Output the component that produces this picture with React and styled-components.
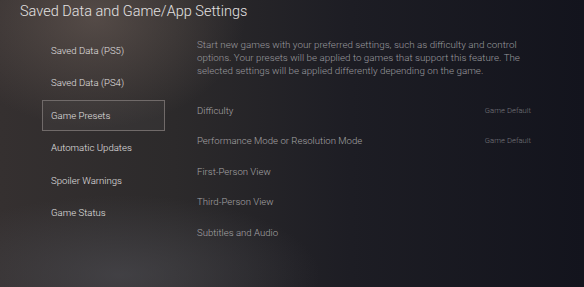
import React from 'react';
import styled, {createGlobalStyle} from 'styled-components';

const GlobalStyle = createGlobalStyle`
  html, body {
    margin: 0;
    padding: 0;
    background: #14151d;
  }
  body {
    font-family: Roboto, "Noto Sans", sans-serif;
  }
`;

const Screen = styled.div`
  width: 584px;
  height: 287px;
  overflow: hidden;
  box-sizing: border-box;
  background:
    radial-gradient(ellipse 150px 110px at 95px 18px, rgba(120, 104, 96, 0.5), rgba(120, 104, 96, 0) 100%),
    radial-gradient(ellipse 200px 80px at 120px 275px, rgba(78, 78, 84, 0.6), rgba(78, 78, 84, 0) 100%),
    linear-gradient(to right, #353030 0%, #2c2a2b 30%, #1d1d24 60%, #13141d 100%);
  color: #d8d8d8;
`;

const Title = styled.h1`
  margin: 0;
  padding: 3px 0 0 20px;
  height: 32px;
  box-sizing: border-box;
  font-size: 14.5px;
  font-weight: 300;
  color: #e4e2e2;
`;

const Body = styled.div`
  display: grid;
  grid-template-columns: 123px 1fr;
  column-gap: 32px;
  padding-left: 42px;
  padding-top: 3px;
`;

const Menu = styled.ul`
  list-style: none;
  margin: 0;
  padding: 0;
  display: flex;
  flex-direction: column;
  gap: 1.4px;
`;

const MenuItem = styled.li`
  height: 31px;
  box-sizing: border-box;
  display: flex;
  align-items: center;
  padding-left: 8px;
  font-size: 9.6px;
  font-weight: 300;
  color: #e2e0e0;
  border: 1px solid ${p => (p.$active ? '#706a69' : 'transparent')};
  background: ${p => (p.$active ? 'rgba(255,255,255,0.035)' : 'transparent')};
`;

const Content = styled.div`
  width: 345px;
  padding-top: 3px;
`;

const Description = styled.p`
  max-width: 328px;
  margin: 0 0 18px;
  font-size: 9.8px;
  font-weight: 300;
  line-height: 13px;
  color: #9a9a9f;
`;

const Row = styled.div`
  height: 30.5px;
  display: flex;
  align-items: center;
  justify-content: space-between;
  padding-right: 11px;
`;

const RowLabel = styled.span`
  font-size: 9.6px;
  font-weight: 300;
  color: #a6a4a6;
`;

const RowValue = styled.span`
  font-size: 7.7px;
  font-weight: 300;
  color: #76767c;
`;

const menu = [
  'Saved Data (PS5)',
  'Saved Data (PS4)',
  'Game Presets',
  'Automatic Updates',
  'Spoiler Warnings',
  'Game Status'
];

const presets = [
  {label: 'Difficulty', value: 'Game Default'},
  {label: 'Performance Mode or Resolution Mode', value: 'Game Default'},
  {label: 'First-Person View'},
  {label: 'Third-Person View'},
  {label: 'Subtitles and Audio'}
];

export default function App() {
  return (
    <Screen>
      <GlobalStyle />
      <Title>Saved Data and Game/App Settings</Title>
      <Body>
        <Menu>
          {menu.map(item => (
            <MenuItem key={item} $active={item === 'Game Presets'}>
              {item}
            </MenuItem>
          ))}
        </Menu>
        <Content>
          <Description>
            Start new games with your preferred settings, such as difficulty and control
            options. Your presets will be applied to games that support this feature. The
            selected settings will be applied differently depending on the game.
          </Description>
          {presets.map(row => (
            <Row key={row.label}>
              <RowLabel>{row.label}</RowLabel>
              {row.value && <RowValue>{row.value}</RowValue>}
            </Row>
          ))}
        </Content>
      </Body>
    </Screen>
  );
}
